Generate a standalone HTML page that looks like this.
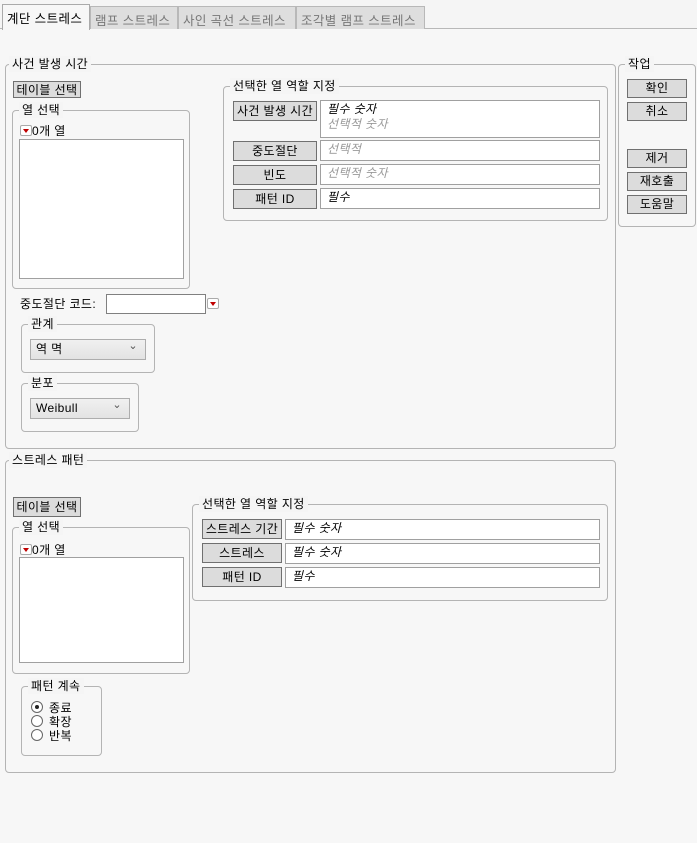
<!DOCTYPE html>
<html><head><meta charset="utf-8"><style>
*{box-sizing:border-box;margin:0;padding:0}
body{width:697px;height:843px;background:#f5f5f5;font-family:"Liberation Sans","Noto Sans CJK KR",sans-serif;font-size:12px;letter-spacing:0.4px;color:#000;position:relative;overflow:hidden}
.a{position:absolute}
.tab{position:absolute;top:6px;height:23px;border:1px solid #b8b8b8;border-bottom:none;background:#dedede;color:#777;padding:3px 0 0 4px;font-size:12.5px;white-space:nowrap}
.grp{position:absolute;border:1px solid #b4b4b4;border-radius:4px}
.lbl{position:absolute;top:-9px;left:6px;background:#f5f5f5;padding:0 3px;line-height:16px;white-space:nowrap}
.btn{position:absolute;background:#dcdcdc;border:1px solid #707070;text-align:center;line-height:16px;white-space:nowrap}
.box{position:absolute;background:#fff;border:1px solid #a0a0a0;padding:1px 0 0 6px;font-style:italic;line-height:15px}
.g{color:#999}
.tri{display:inline-block;width:12px;height:11px;border:1px solid #aaa;border-radius:2px;background:#fff;position:relative;vertical-align:-1px}
.tri:after{content:"";position:absolute;left:2px;top:3px;border-left:3px solid transparent;border-right:3px solid transparent;border-top:4px solid #c00000}
.sel{position:absolute;border:1px solid #adadad;background:linear-gradient(#f0f0f0,#e3e3e3);padding:2px 0 0 5px;line-height:15px}
.sel:after{content:"⌄";position:absolute;right:7px;top:-1px;font-size:11px;color:#555}
.rad{position:absolute;width:12px;height:12px;border:1px solid #666;border-radius:50%;background:#fff}
</style></head><body>
<div class="a" style="left:0;top:28px;width:697px;height:815px;background:#f7f7f7;border-top:1px solid #b8b8b8"></div>
<div class="tab" style="left:2px;top:4px;width:88px;height:26px;background:#f7f7f7;color:#000;border-color:#aaa">계단 스트레스</div>
<div class="tab" style="left:90px;width:88px">램프 스트레스</div>
<div class="tab" style="left:178px;width:118px">사인 곡선 스트레스</div>
<div class="tab" style="left:296px;width:129px">조각별 램프 스트레스</div>

<div class="grp" style="left:5px;top:64px;width:611px;height:385px"><div class="lbl" style="left:3px">사건 발생 시간</div></div>
<div class="btn" style="left:13px;top:81px;width:68px;height:17px">테이블 선택</div>
<div class="grp" style="left:12px;top:110px;width:178px;height:179px"><div class="lbl">열 선택</div></div>
<div class="a" style="left:20px;top:122px"><span class="tri"></span>0개 열</div>
<div class="a" style="left:19px;top:139px;width:165px;height:140px;background:#fff;border:1px solid #a0a0a0"></div>

<div class="grp" style="left:223px;top:86px;width:385px;height:135px"><div class="lbl">선택한 열 역할 지정</div></div>
<div class="btn" style="left:233px;top:101px;width:84px;height:20px;line-height:18px">사건 발생 시간</div>
<div class="box" style="left:320px;top:100px;width:280px;height:38px"><div>필수 숫자</div><div class="g">선택적 숫자</div></div>
<div class="btn" style="left:233px;top:141px;width:84px;height:20px;line-height:18px">중도절단</div>
<div class="box g" style="left:320px;top:140px;width:280px;height:21px">선택적</div>
<div class="btn" style="left:233px;top:165px;width:84px;height:20px;line-height:18px">빈도</div>
<div class="box g" style="left:320px;top:164px;width:280px;height:21px">선택적 숫자</div>
<div class="btn" style="left:233px;top:189px;width:84px;height:20px;line-height:18px">패턴 ID</div>
<div class="box" style="left:320px;top:188px;width:280px;height:21px">필수</div>

<div class="a" style="left:20px;top:295px">중도절단 코드:</div>
<div class="a" style="left:106px;top:294px;width:100px;height:20px;background:#fff;border:1px solid #808080"></div>
<div class="a" style="left:207px;top:297px"><span class="tri"></span></div>
<div class="grp" style="left:21px;top:324px;width:134px;height:49px"><div class="lbl">관계</div></div>
<div class="sel" style="left:30px;top:339px;width:116px;height:21px">역 멱</div>
<div class="grp" style="left:21px;top:383px;width:118px;height:49px"><div class="lbl">분포</div></div>
<div class="sel" style="left:30px;top:398px;width:100px;height:21px">Weibull</div>

<div class="grp" style="left:618px;top:64px;width:78px;height:163px"><div class="lbl">작업</div></div>
<div class="btn" style="left:627px;top:79px;width:60px;height:19px">확인</div>
<div class="btn" style="left:627px;top:102px;width:60px;height:19px">취소</div>
<div class="btn" style="left:627px;top:149px;width:60px;height:19px">제거</div>
<div class="btn" style="left:627px;top:172px;width:60px;height:19px">재호출</div>
<div class="btn" style="left:627px;top:195px;width:60px;height:19px">도움말</div>

<div class="grp" style="left:5px;top:460px;width:611px;height:313px"><div class="lbl" style="left:3px">스트레스 패턴</div></div>
<div class="btn" style="left:13px;top:497px;width:68px;height:20px;line-height:18px">테이블 선택</div>
<div class="grp" style="left:12px;top:527px;width:178px;height:147px"><div class="lbl">열 선택</div></div>
<div class="a" style="left:20px;top:541px"><span class="tri"></span>0개 열</div>
<div class="a" style="left:19px;top:557px;width:165px;height:106px;background:#fff;border:1px solid #a0a0a0"></div>

<div class="grp" style="left:192px;top:504px;width:416px;height:97px"><div class="lbl">선택한 열 역할 지정</div></div>
<div class="btn" style="left:202px;top:519px;width:80px;height:20px;line-height:18px">스트레스 기간</div>
<div class="box" style="left:285px;top:519px;width:315px;height:21px">필수 숫자</div>
<div class="btn" style="left:202px;top:543px;width:80px;height:20px;line-height:18px">스트레스</div>
<div class="box" style="left:285px;top:543px;width:315px;height:21px">필수 숫자</div>
<div class="btn" style="left:202px;top:567px;width:80px;height:20px;line-height:18px">패턴 ID</div>
<div class="box" style="left:285px;top:567px;width:315px;height:21px">필수</div>

<div class="grp" style="left:21px;top:686px;width:81px;height:70px"><div class="lbl">패턴 계속</div></div>
<div class="rad" style="left:31px;top:701px"><div style="position:absolute;left:3px;top:3px;width:4px;height:4px;border-radius:50%;background:#222"></div></div>
<div class="a" style="left:49px;top:699px">종료</div>
<div class="rad" style="left:31px;top:715px"></div>
<div class="a" style="left:49px;top:713px">확장</div>
<div class="rad" style="left:31px;top:729px"></div>
<div class="a" style="left:49px;top:727px">반복</div>
</body></html>
